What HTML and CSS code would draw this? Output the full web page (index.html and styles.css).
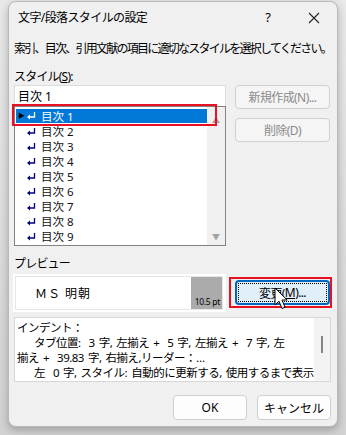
FILE: index.html
```html
<!DOCTYPE html>
<html>
  <head>
    <meta charset="utf-8">
    <title>文字/段落スタイルの設定</title>
    <link rel="stylesheet" href="styles.css">
  </head>
  <body>
    <div class="dialog">
      <div class="titlebar">
        <span class="title">文字/段落スタイルの設定</span>
        <span class="title-btn help">?</span>
        <span class="title-btn close">
          <svg width="12" height="12" viewBox="0 0 12 12"><path d="M1 1L11 11M11 1L1 11" stroke="#222" stroke-width="1.1"/></svg>
        </span>
      </div>
      <div class="content">
        <p class="desc">索引、目次、引用文献の項目に適切なスタイルを選択してください。</p>
        <p class="label">スタイル(<u>S</u>):</p>
        <div class="style-row">
          <div class="style-col">
            <div class="style-input">目次 1</div>
            <div class="style-list">
              <div class="items">
                <div class="item selected"><span class="mark">&#9654;</span><svg class="ret" width="9" height="8" viewBox="0 0 9 8"><path d="M7.5 0V5H2" stroke="#fff" stroke-width="1.3" fill="none"/><path d="M0 5L3 2.5V7.5Z" fill="#fff"/></svg><span class="name">目次 1</span></div>
                <div class="item"><span class="mark"></span><svg class="ret" width="9" height="8" viewBox="0 0 9 8"><path d="M7.5 0V5H2" stroke="#000080" stroke-width="1.3" fill="none"/><path d="M0 5L3 2.5V7.5Z" fill="#000080"/></svg><span class="name">目次 2</span></div>
                <div class="item"><span class="mark"></span><svg class="ret" width="9" height="8" viewBox="0 0 9 8"><path d="M7.5 0V5H2" stroke="#000080" stroke-width="1.3" fill="none"/><path d="M0 5L3 2.5V7.5Z" fill="#000080"/></svg><span class="name">目次 3</span></div>
                <div class="item"><span class="mark"></span><svg class="ret" width="9" height="8" viewBox="0 0 9 8"><path d="M7.5 0V5H2" stroke="#000080" stroke-width="1.3" fill="none"/><path d="M0 5L3 2.5V7.5Z" fill="#000080"/></svg><span class="name">目次 4</span></div>
                <div class="item"><span class="mark"></span><svg class="ret" width="9" height="8" viewBox="0 0 9 8"><path d="M7.5 0V5H2" stroke="#000080" stroke-width="1.3" fill="none"/><path d="M0 5L3 2.5V7.5Z" fill="#000080"/></svg><span class="name">目次 5</span></div>
                <div class="item"><span class="mark"></span><svg class="ret" width="9" height="8" viewBox="0 0 9 8"><path d="M7.5 0V5H2" stroke="#000080" stroke-width="1.3" fill="none"/><path d="M0 5L3 2.5V7.5Z" fill="#000080"/></svg><span class="name">目次 6</span></div>
                <div class="item"><span class="mark"></span><svg class="ret" width="9" height="8" viewBox="0 0 9 8"><path d="M7.5 0V5H2" stroke="#000080" stroke-width="1.3" fill="none"/><path d="M0 5L3 2.5V7.5Z" fill="#000080"/></svg><span class="name">目次 7</span></div>
                <div class="item"><span class="mark"></span><svg class="ret" width="9" height="8" viewBox="0 0 9 8"><path d="M7.5 0V5H2" stroke="#000080" stroke-width="1.3" fill="none"/><path d="M0 5L3 2.5V7.5Z" fill="#000080"/></svg><span class="name">目次 8</span></div>
                <div class="item"><span class="mark"></span><svg class="ret" width="9" height="8" viewBox="0 0 9 8"><path d="M7.5 0V5H2" stroke="#000080" stroke-width="1.3" fill="none"/><path d="M0 5L3 2.5V7.5Z" fill="#000080"/></svg><span class="name">目次 9</span></div>
              </div>
              <div class="scrollbar">
                <span class="arrow">&#9650;</span>
                <span class="arrow">&#9660;</span>
              </div>
              <div class="highlight-row"></div>
            </div>
          </div>
          <div class="side-buttons">
            <div class="btn disabled">新規作成(N)...</div>
            <div class="btn disabled">削除(D)</div>
          </div>
        </div>
        <p class="label preview-label">プレビュー</p>
        <div class="preview-row">
          <div class="preview">
            <div class="preview-inner">
              <span class="font-name">ＭＳ 明朝</span>
              <span class="font-size">10.5 pt</span>
            </div>
          </div>
          <div class="modify-wrap">
            <div class="btn focused"><span class="focus-ring">変更(<u>M</u>)...</span></div>
            <svg class="cursor" width="14" height="24" viewBox="0 0 14 24">
              <path d="M1 1V18L5 14.2L8 21.5L11 20.2L8 13H13.2Z" fill="#fff" stroke="#000" stroke-width="1" stroke-linejoin="round"/>
            </svg>
          </div>
        </div>
        <div class="details">
          <div class="details-text">
            <div class="line">インデント：</div>
            <div class="line indent">タブ位置:&nbsp; 3 字, 左揃え +&nbsp; 5 字, 左揃え +&nbsp; 7 字, 左</div>
            <div class="line">揃え +&nbsp; 39.83 字, 右揃え,リーダー：…</div>
            <div class="line indent">左&nbsp; 0 字, スタイル: 自動的に更新する, 使用するまで表示</div>
          </div>
          <div class="details-scroll"><span class="thumb"></span></div>
        </div>
        <div class="footer">
          <div class="btn footer-btn">OK</div>
          <div class="btn footer-btn">キャンセル</div>
        </div>
      </div>
    </div>
  </body>
</html>
```

FILE: styles.css
```css
body {
  margin: 0;
  width: 346px;
  height: 435px;
  background: linear-gradient(to bottom, #e9e9e9, #d2d2d2);
  font-family: "Noto Sans", "Noto Sans CJK JP", sans-serif;
  font-size: 12px;
  color: #000;
  overflow: hidden;
}
p {
  margin: 0;
}
.dialog {
  margin: 1px 0 0 8px;
  width: 330px;
  height: 426px;
  box-sizing: border-box;
  background: #f0f0f0;
  border: 1px solid #b9b9b9;
  border-radius: 8px;
  box-shadow: 0 3px 8px rgba(0, 0, 0, 0.25);
}
.titlebar {
  height: 29px;
  display: flex;
  align-items: center;
  padding-left: 9px;
}
.title {
  flex: 1;
  letter-spacing: -0.6px;
}
.title-btn {
  width: 46px;
  text-align: center;
}
.help {
  font-size: 13px;
}
.close {
  display: flex;
  justify-content: center;
  padding-top: 2px;
}
.content {
  padding: 0 6px 0 5px;
}
.desc {
  margin-top: 9px;
  line-height: 18px;
  letter-spacing: -1.75px;
  white-space: nowrap;
}
.label {
  margin-top: 10px;
  line-height: 17px;
  letter-spacing: -0.8px;
}
.style-row {
  display: flex;
  gap: 9px;
}
.style-col {
  width: 212px;
}
.style-input {
  height: 21px;
  box-sizing: border-box;
  background: #fff;
  border: 1px solid #dcdcdc;
  border-bottom: none;
  padding: 1px 0 0 3px;
  line-height: 20px;
}
.style-list {
  position: relative;
  height: 140px;
  box-sizing: border-box;
  background: #fff;
  border: 1px solid #828282;
  display: flex;
}
.items {
  flex: 1;
  padding: 2px 0 0 1px;
}
.item {
  height: 15px;
  overflow: hidden;
  display: flex;
  align-items: center;
  color: #111;
}
.name {
  display: block;
  height: 15px;
  line-height: 15px;
  font-size: 11.5px;
  overflow: hidden;
}
.item.selected {
  background: #0078d7;
  color: #fff;
  height: 14px;
  margin-bottom: 1px;
}
.mark {
  width: 8px;
  font-size: 7px;
  line-height: 8px;
  padding-left: 2px;
  color: #000;
}
.ret {
  margin: 0 5px 0 1px;
}
.scrollbar {
  width: 18px;
  background: #f0f0f0;
  display: flex;
  flex-direction: column;
  justify-content: space-between;
  align-items: center;
  padding: 8px 0 4px;
}
.arrow {
  font-size: 8px;
  color: #a3a3a3;
  line-height: 9px;
}
.highlight-row {
  position: absolute;
  left: -3px;
  top: -3px;
  width: 201px;
  height: 18px;
  border: 2px solid #e81123;
}
.side-buttons {
  width: 95px;
  display: flex;
  flex-direction: column;
  gap: 9px;
}
.btn {
  height: 24px;
  box-sizing: border-box;
  border: 1px solid #d0d0d0;
  border-radius: 4px;
  background: #fdfdfd;
  display: flex;
  align-items: center;
  justify-content: center;
  letter-spacing: -0.6px;
}
.btn.disabled {
  background: #f5f5f5;
  color: #8a8a8a;
}
.preview-label {
  margin-top: 9px;
}
.preview-row {
  display: flex;
  gap: 9px;
  margin-top: 2px;
}
.preview {
  width: 213px;
  height: 38px;
  box-sizing: border-box;
  margin-left: -1px;
  background: #fff;
  padding: 2px 3px 2px 2px;
}
.preview-inner {
  height: 100%;
  box-sizing: border-box;
  border: 1px solid #e6e6e6;
  display: flex;
  align-items: center;
}
.font-name {
  flex: 1;
  padding-left: 19px;
  letter-spacing: 1px;
}
.font-size {
  width: 31px;
  height: 100%;
  background: #ababab;
  font-size: 8.5px;
  letter-spacing: -0.3px;
  display: flex;
  align-items: flex-end;
  justify-content: flex-end;
  padding: 0 2px 2px 0;
  box-sizing: border-box;
}
.modify-wrap {
  position: relative;
  width: 95px;
  padding-top: 6px;
}
.modify-wrap::before {
  content: "";
  position: absolute;
  left: -6px;
  top: 3px;
  width: 99px;
  height: 27px;
  border: 2px solid #e81123;
}
.btn.focused {
  height: 25px;
  border: 2px solid #0067c0;
  background: #e1effa;
  padding: 1px;
}
.focus-ring {
  flex: 1;
  height: 100%;
  box-sizing: border-box;
  border: 1px dotted #000;
  display: flex;
  align-items: center;
  justify-content: center;
}
.cursor {
  position: absolute;
  left: 39px;
  top: 13px;
}
.details {
  margin-top: 5px;
  height: 65px;
  box-sizing: border-box;
  background: #fff;
  border: 1px solid #d7d7d7;
  display: flex;
}
.details-text {
  flex: 1;
  padding: 2px 0 0 2px;
  font-size: 11.5px;
  letter-spacing: -0.5px;
  word-spacing: 1.5px;
  white-space: nowrap;
}
.line {
  height: 15px;
  line-height: 15px;
  overflow: hidden;
}
.indent {
  padding-left: 17px;
}
.details-scroll {
  width: 18px;
  background: #f3f3f3;
  display: flex;
  justify-content: center;
  padding-top: 18px;
  box-sizing: border-box;
}
.thumb {
  width: 2px;
  height: 17px;
  background: #858585;
}
.footer {
  display: flex;
  justify-content: flex-end;
  gap: 10px;
  margin-top: 13px;
}
.footer-btn {
  width: 74px;
  height: 25px;
  letter-spacing: 0;
}
```
